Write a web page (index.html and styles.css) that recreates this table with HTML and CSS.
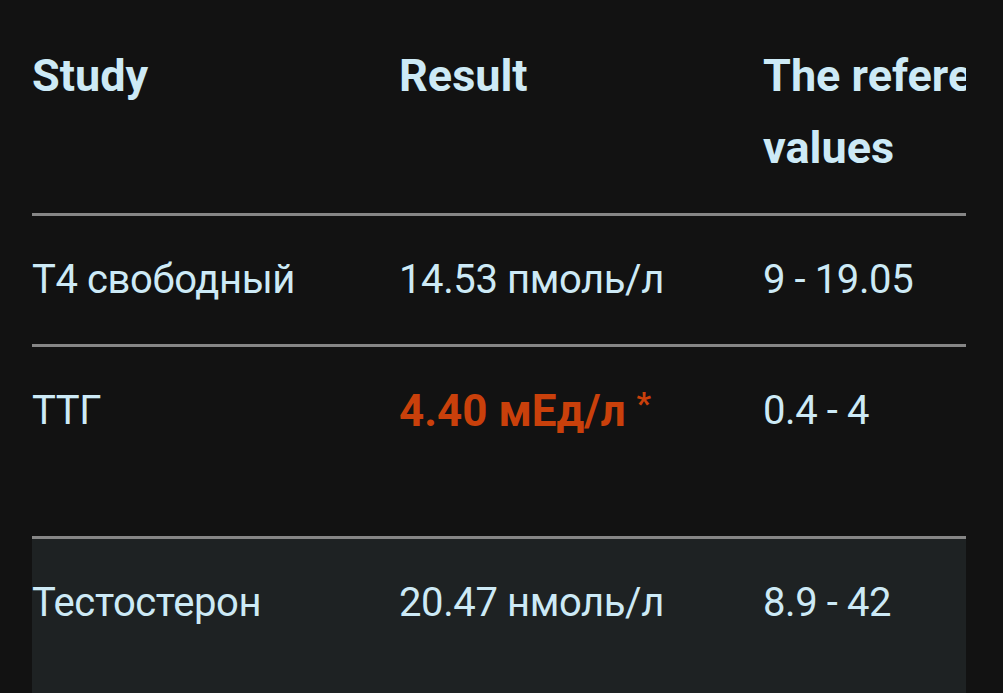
FILE: index.html
```html
<!DOCTYPE html>
<html lang="ru">
<head>
<meta charset="utf-8">
<title>Results</title>
<link rel="stylesheet" href="styles.css">
</head>
<body>
<div class="wrap">
  <div class="scroller">
    <table class="results">
      <colgroup>
        <col class="c-study">
        <col class="c-result">
        <col class="c-ref">
      </colgroup>
      <thead>
        <tr>
          <th>Study</th>
          <th>Result</th>
          <th>The reference values</th>
        </tr>
      </thead>
      <tbody>
        <tr>
          <td>Т4 свободный</td>
          <td>14.53 пмоль/л</td>
          <td>9 - 19.05</td>
        </tr>
        <tr class="tall">
          <td>ТТГ</td>
          <td class="bad">4.40 мЕд/л <sup>*</sup></td>
          <td>0.4 - 4</td>
        </tr>
        <tr class="tall alt">
          <td>Тестостерон</td>
          <td>20.47 нмоль/л</td>
          <td>8.9 - 42</td>
        </tr>
      </tbody>
    </table>
  </div>
</div>
</body>
</html>
```

FILE: styles.css
```css
html, body {
  margin: 0;
  padding: 0;
  background: #121212;
  height: 100%;
  overflow: hidden;
}
.wrap {
  padding-left: 32px;
}
.scroller {
  width: 934px;
  overflow: hidden;
}
.results {
  border-collapse: collapse;
  table-layout: fixed;
  width: 1099px;
  font-family: Roboto, "Noto Sans", sans-serif;
  color: #cdeaf6;
}
.c-study {
  width: 367px;
}
.c-result {
  width: 364px;
}
.c-ref {
  width: 368px;
}
.results th,
.results td {
  text-align: left;
  vertical-align: top;
  padding: 0;
}
.results th {
  font-size: 45px;
  line-height: 72px;
  font-weight: 700;
  padding: 40px 30px 29px 0;
  border-bottom: 3px solid #868686;
}
.results td {
  font-size: 40px;
  letter-spacing: -0.4px;
  line-height: 72px;
  font-weight: 400;
  padding: 28px 30px 28px 0;
  border-bottom: 3px solid #868686;
}
.results tr.tall td {
  padding-bottom: 89px;
}
.results tr.alt td {
  background: #1e2223;
}
.results td.bad {
  color: #c9400b;
  font-weight: 700;
  font-size: 44px;
  letter-spacing: 0;
}
.results td.bad sup {
  font-size: 32px;
  line-height: 0;
  vertical-align: 12px;
}
```
